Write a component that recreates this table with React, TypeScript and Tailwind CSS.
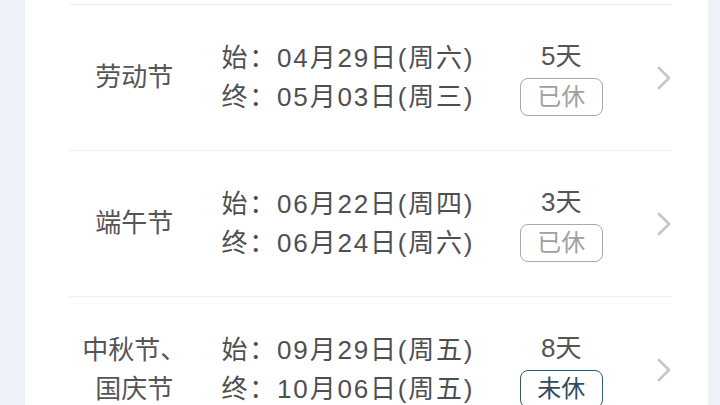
import React from 'react';

interface Holiday {
  name: string;
  start: string;
  end: string;
  days: string;
  rested: boolean;
}

const holidays: Holiday[] = [
  { name: '劳动节', start: '04月29日(周六)', end: '05月03日(周三)', days: '5天', rested: true },
  { name: '端午节', start: '06月22日(周四)', end: '06月24日(周六)', days: '3天', rested: true },
  { name: '中秋节、国庆节', start: '09月29日(周五)', end: '10月06日(周五)', days: '8天', rested: false },
];

const font = { fontFamily: '"Liberation Sans", "Noto Sans CJK SC", sans-serif' };

function Chevron() {
  return (
    <svg width="16" height="26" viewBox="0 0 16 26" fill="none">
      <path d="M3 3l10 10-10 10" stroke="#c6c6c6" strokeWidth="2.6" strokeLinecap="round" strokeLinejoin="round" />
    </svg>
  );
}

export default function App() {
  return (
    <div className="w-[720px] h-[405px] overflow-hidden bg-[#eff1f8]" style={font}>
      <div className="ml-[25px] w-[683px] h-full bg-white pt-[4px]">
        {holidays.map((h) => (
          <div key={h.name} className="ml-[44px] mr-[36px] h-[146px] border-t-[1.5px] border-[#f0f0f0] flex items-center">
            {/* name */}
            <div className="w-[131px] text-center text-[26px] leading-[39px] text-[#555]">
              {h.name.length > 3 ? (
                <>
                  <div>中秋节、</div>
                  <div>国庆节</div>
                </>
              ) : (
                h.name
              )}
            </div>

            {/* dates */}
            <div className="ml-[22px] w-[291px] text-[26px] leading-[39px] text-[#4f4f4f] tracking-[1.8px]">
              <div>始：{h.start}</div>
              <div>终：{h.end}</div>
            </div>

            {/* days + badge */}
            <div className="w-[100px] flex flex-col items-center gap-[8px] mt-[2px]">
              <div className="text-[26px] leading-[28px] text-[#555]">{h.days}</div>
              <div
                className={`w-[83px] h-[38px] rounded-[8px] flex items-center justify-center text-[24px] ${
                  h.rested
                    ? 'border-[1.5px] border-[#a8a8a8] text-[#a0a0a0]'
                    : 'border-[1.5px] border-[#36596a] text-[#2e4c5c]'
                }`}
              >
                {h.rested ? '已休' : '未休'}
              </div>
            </div>

            {/* arrow */}
            <div className="ml-[45px] flex items-center">
              <Chevron />
            </div>
          </div>
        ))}
      </div>
    </div>
  );
}
